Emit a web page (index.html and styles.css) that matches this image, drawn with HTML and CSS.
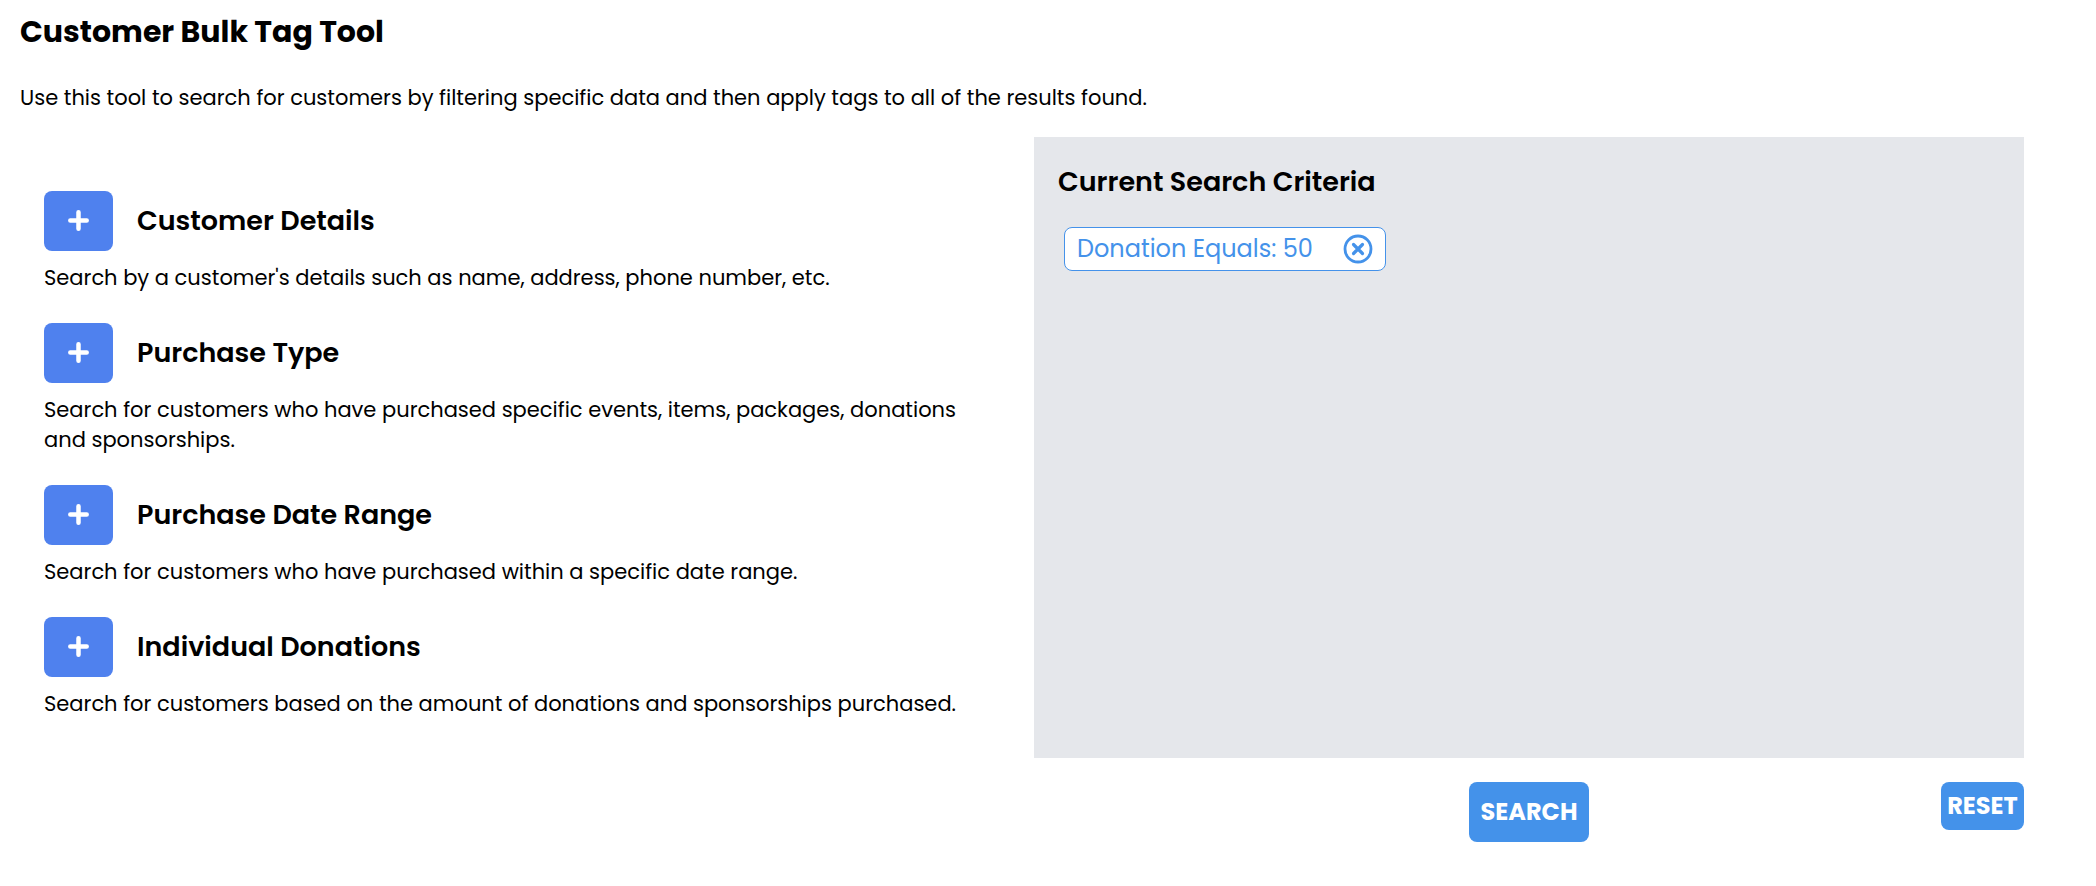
FILE: index.html
```
<!DOCTYPE html>
<html lang="en">
<head>
<meta charset="utf-8">
<meta name="viewport" content="width=device-width, initial-scale=1">
<title>Customer Bulk Tag Tool</title>
<link rel="stylesheet" href="styles.css">
</head>
<body>
<svg class="sprite" aria-hidden="true">
  <symbol id="plus" viewBox="0 0 21 21"><path d="M10.5 2.3v16.4M2.3 10.5h16.4" fill="none" stroke="currentColor" stroke-width="4.5" stroke-linecap="round"/></symbol>
</svg>
<main class="page">
  <h1 class="title">Customer Bulk Tag Tool</h1>
  <p class="intro">Use this tool to search for customers by filtering specific data and then apply tags to all of the results found.</p>
  <div class="columns">
    <div class="filters">
      <section class="filter">
        <div class="filter-head">
          <button class="add" type="button" aria-label="Add Customer Details"><svg class="plus"><use href="#plus"/></svg></button>
          <h2 class="heading">Customer Details</h2>
        </div>
        <p class="desc">Search by a customer's details such as name, address, phone number, etc.</p>
      </section>
      <section class="filter">
        <div class="filter-head">
          <button class="add" type="button" aria-label="Add Purchase Type"><svg class="plus"><use href="#plus"/></svg></button>
          <h2 class="heading">Purchase Type</h2>
        </div>
        <p class="desc">Search for customers who have purchased specific events, items, packages, donations and sponsorships.</p>
      </section>
      <section class="filter">
        <div class="filter-head">
          <button class="add" type="button" aria-label="Add Purchase Date Range"><svg class="plus"><use href="#plus"/></svg></button>
          <h2 class="heading">Purchase Date Range</h2>
        </div>
        <p class="desc">Search for customers who have purchased within a specific date range.</p>
      </section>
      <section class="filter">
        <div class="filter-head">
          <button class="add" type="button" aria-label="Add Individual Donations"><svg class="plus"><use href="#plus"/></svg></button>
          <h2 class="heading">Individual Donations</h2>
        </div>
        <p class="desc">Search for customers based on the amount of donations and sponsorships purchased.</p>
      </section>
    </div>
    <section class="criteria">
      <h2 class="heading">Current Search Criteria</h2>
      <div class="chip">
        <span>Donation Equals: 50</span>
        <button class="remove" type="button" aria-label="Remove Donation Equals: 50">
          <svg class="remove-icon" viewBox="0 0 30 30" fill="none" stroke="currentColor" stroke-linecap="round"><circle cx="15" cy="15" r="13" stroke-width="2.8"/><path d="M10.5 10.5l9 9M19.5 10.5l-9 9" stroke-width="3.2"/></svg>
        </button>
      </div>
    </section>
    <div class="actions">
      <button class="action search" type="button">SEARCH</button>
      <button class="action reset" type="button">RESET</button>
    </div>
  </div>
</main>
</body>
</html>
```
FILE: styles.css
```
* { box-sizing: border-box; }
body {
  margin: 0;
  background: #fff;
  color: #000;
  font-family: Poppins, Inter, sans-serif;
  font-size: 21px;
  line-height: 30px;
}
h1, h2, p { margin: 0; }
button { font-family: inherit; border: 0; cursor: pointer; }
.sprite { display: none; }
.page { padding: 12px 72px 44px 20px; }
.title { font-size: 30px; line-height: 40px; font-weight: 700; }
.intro { margin: 31px 0 24px; }
.columns {
  display: grid;
  grid-template-columns: repeat(2, minmax(0, 1fr));
  column-gap: 24px;
  row-gap: 24px;
}
.filters { padding: 39px 24px 24px; }
.filter { padding: 15px 0; }
.filter-head { display: flex; align-items: center; gap: 24px; margin-bottom: 12px; }
.add {
  width: 69px;
  height: 60px;
  border-radius: 8px;
  background: #4f81ee;
  color: #fff;
  display: grid;
  place-items: center;
  padding: 0 0 2px;
}
.plus { width: 21px; height: 21px; }
.heading { font-size: 27px; line-height: 36px; font-weight: 600; }
.criteria { background: #e5e7eb; padding: 27px 24px; }
.chip {
  display: inline-flex;
  align-items: center;
  gap: 30px;
  height: 44px;
  margin: 27px 6px 0;
  padding: 0 12px;
  border: 1px solid #4492ea;
  border-radius: 8px;
  background: #fff;
  color: #4492ea;
  font-size: 24px;
}
.remove { display: flex; padding: 0; background: none; color: inherit; }
.remove-icon { width: 30px; height: 30px; }
.actions {
  grid-column: 2;
  display: grid;
  grid-template-columns: 1fr auto 1fr;
  align-items: start;
}
.action {
  border-radius: 8px;
  background: #4492ea;
  color: #fff;
  font-size: 24px;
  line-height: 36px;
  font-weight: 700;
}
.search { grid-column: 2; width: 120px; height: 60px; padding: 0; }
.reset { justify-self: end; width: 83px; height: 48px; padding: 0; }
```
